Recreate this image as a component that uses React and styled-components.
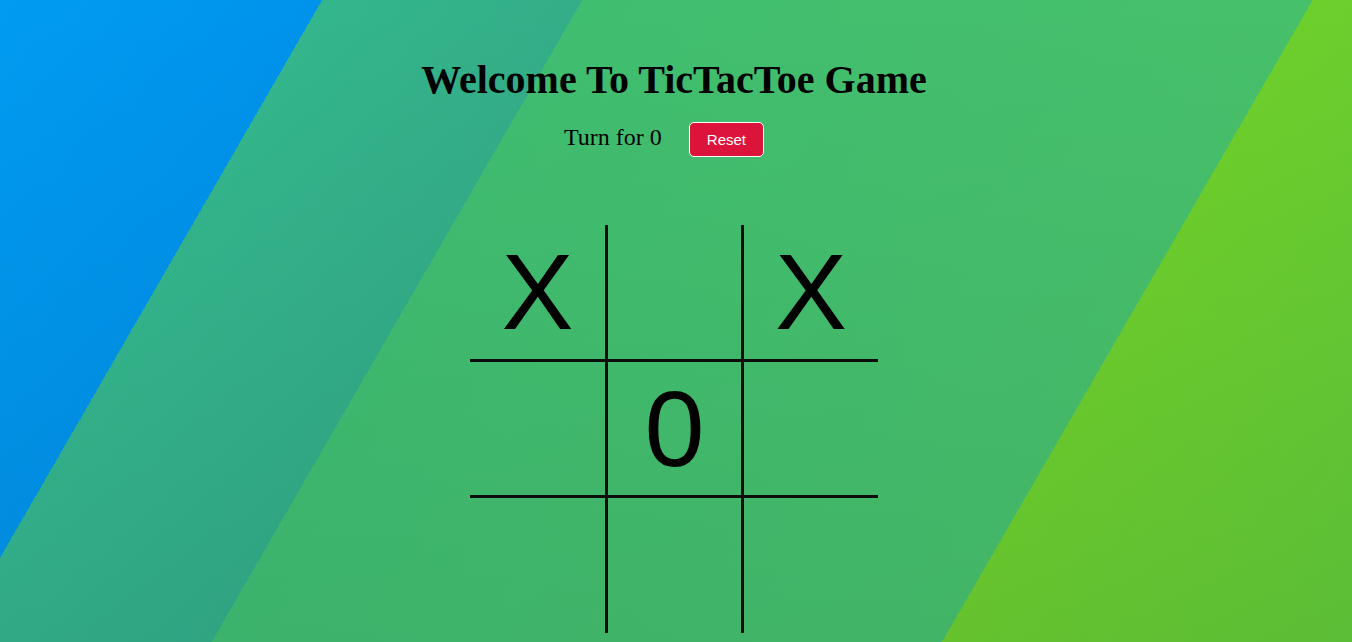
import React, { useState } from 'react';
import styled, { createGlobalStyle } from 'styled-components';

const GlobalStyle = createGlobalStyle`
    html, body {
        margin: 0;
        padding: 0;
        height: 100%;
        overflow: hidden;
    }
`;

const initialBoard = ['X', '', 'X', '', '0', '', '', '', ''];

const Page = styled.div`
    min-height: 100vh;
    box-sizing: border-box;
    display: flex;
    flex-direction: column;
    align-items: center;
    padding: 56px 4px 0 0;
    font-family: 'Liberation Serif', 'Times New Roman', serif;
    color: #000;
    background:
        linear-gradient(to bottom, rgba(10, 40, 60, 0) 0%, rgba(10, 40, 60, 0.08) 100%),
        linear-gradient(
            120deg,
            #009cf1 0%,
            #0093eb 18.7%,
            #34b68c 18.7%,
            #33ae88 33.8%,
            #40be70 33.8%,
            #47c06a 76.2%,
            #6dcf2c 76.2%,
            #62ca36 100%
        );
`;

const Title = styled.h1`
    margin: 0;
    font-size: 40px;
    font-weight: bold;
    line-height: normal;
`;

const TurnRow = styled.div`
    display: flex;
    align-items: baseline;
    margin-top: 19px;
    padding-right: 20px;
`;

const TurnText = styled.span`
    font-size: 24px;
    line-height: normal;
`;

const ResetButton = styled.button`
    margin-left: 27px;
    padding: 8px 17px;
    border: 1px solid #fff;
    border-radius: 5px;
    background: #dc143c;
    color: #fff;
    font-family: 'Liberation Sans', Arial, sans-serif;
    font-size: 15px;
    line-height: normal;
    cursor: pointer;
`;

const Board = styled.div`
    display: grid;
    grid-template-columns: 135px 139px 134px;
    grid-template-rows: 134px 139px 135px;
    margin-top: 68px;
`;

const Cell = styled.div`
    box-sizing: border-box;
    display: flex;
    align-items: center;
    justify-content: center;
    border-color: #0d0d0d;
    border-style: solid;
    border-width: ${props => (props.$row === 1 ? '3px' : '0')}
        ${props => (props.$col === 1 ? '3px' : '0')};
    font-family: 'Liberation Sans', Arial, sans-serif;
    font-size: 108px;
    line-height: 1;
    cursor: pointer;
`;

const App = () => {
    const [board, setBoard] = useState(initialBoard);
    const [turn, setTurn] = useState('0');

    const play = index => {
        if (board[index]) return;
        const next = [...board];
        next[index] = turn;
        setBoard(next);
        setTurn(turn === 'X' ? '0' : 'X');
    };

    const reset = () => {
        setBoard(Array(9).fill(''));
        setTurn('X');
    };

    return (
        <Page>
            <GlobalStyle />
            <Title>Welcome To TicTacToe Game</Title>
            <TurnRow>
                <TurnText>Turn for {turn}</TurnText>
                <ResetButton onClick={reset}>Reset</ResetButton>
            </TurnRow>
            <Board>
                {board.map((value, i) => (
                    <Cell key={i} $row={Math.floor(i / 3)} $col={i % 3} onClick={() => play(i)}>
                        {value}
                    </Cell>
                ))}
            </Board>
        </Page>
    );
};

export default App;
